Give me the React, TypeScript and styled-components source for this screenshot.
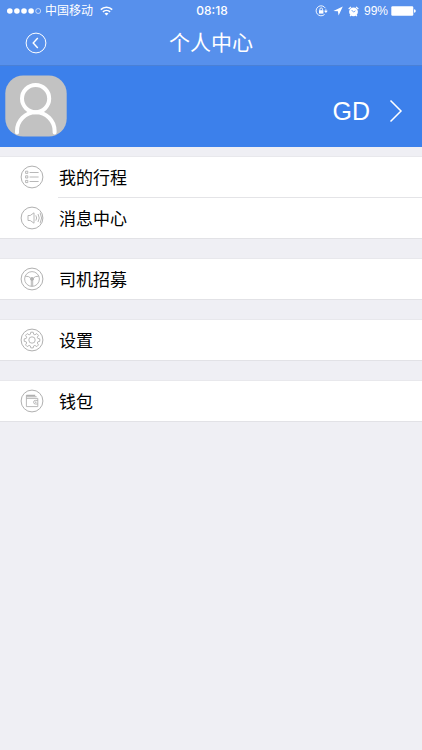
import React from "react";
import styled, { createGlobalStyle } from "styled-components";

const GlobalStyle = createGlobalStyle`
  * { box-sizing: border-box; }
  body {
    margin: 0;
    background: #efeff4;
    font-family: "Liberation Sans", "Noto Sans CJK SC", sans-serif;
    color: #000;
  }
  button { font: inherit; color: inherit; border: 0; padding: 0; background: none; cursor: pointer; }
  svg { display: block; flex: none; }
`;

const Page = styled.div`
  display: flex;
  flex-direction: column;
  min-height: 100vh;
`;

const Header = styled.header`
  background: #5790ec;
  border-bottom: 1px solid #4a80d6;
  color: #fff;
`;

const StatusBar = styled.div`
  display: grid;
  grid-template-columns: 1fr auto 1fr;
  align-items: center;
  height: 22px;
  padding: 0 6px 0 7px;
  line-height: 22px;
`;

const StatusSide = styled.div<{ $end?: boolean }>`
  display: flex;
  align-items: center;
  justify-content: ${(p) => (p.$end ? "flex-end" : "flex-start")};
  gap: ${(p) => (p.$end ? 5 : 3)}px;
`;

const Carrier = styled.span`
  font-size: 12px;
  margin-right: 4px;
`;

const Percent = styled.span`
  margin: 0 -2px 0 0;
  font-size: 12px;
`;

const Clock = styled.time`
  padding-left: 1px;
  font-family: Inter, sans-serif;
  font-size: 12px;
  font-weight: 500;
`;

const NavBar = styled.div`
  display: grid;
  grid-template-columns: 60px 1fr 60px;
  align-items: center;
  height: 43px;
`;

const BackButton = styled.button`
  justify-self: end;
  margin-right: 13px;
  padding-bottom: 1px;
`;

const Title = styled.h1`
  margin: 0;
  font-size: 21px;
  line-height: 40px;
  font-weight: 400;
  text-align: center;
  padding-bottom: 2px;
`;

const Profile = styled.button`
  display: flex;
  align-items: center;
  width: 100%;
  height: 81px;
  padding: 0 19px 0 5px;
  background: #3c80eb;
  color: #fff;
`;

const UserName = styled.span`
  margin-left: auto;
  margin-right: 19px;
  padding-top: 8px;
  font-size: 25px;
  line-height: 30px;
`;

const Chevron = styled.svg`
  margin-top: 8px;
`;

const Menu = styled.nav`
  display: flex;
  flex-direction: column;
  gap: 19px;
  padding-top: 9px;
`;

const Group = styled.ul`
  list-style: none;
  margin: 0;
  padding: 0;
  background: #fff;
  border-top: 1px solid #e8e8ec;
  border-bottom: 1px solid #e2e2e6;
`;

const Item = styled.li`
  & + &::before {
    content: "";
    display: block;
    height: 1px;
    margin-left: 58px;
    background: #e4e4e7;
  }
`;

const Row = styled.button`
  display: flex;
  align-items: center;
  gap: 15px;
  width: 100%;
  height: 40px;
  padding: 0 20px;
  font-size: 17px;
  line-height: 24px;
  text-align: left;
`;

const Label = styled.span`
  padding-top: 4px;
`;

const Signal = () => (
  <svg width="35" height="8" viewBox="0 0 35 8" fill="#fff" aria-hidden="true">
    <circle cx="2.8" cy="4" r="2.8" />
    <circle cx="9.9" cy="4" r="2.8" />
    <circle cx="17" cy="4" r="2.8" />
    <circle cx="24.1" cy="4" r="2.8" />
    <circle cx="31.2" cy="4" r="2.5" fill="none" stroke="#fff" strokeWidth="0.6" />
  </svg>
);

const Wifi = () => (
  <svg width="13" height="10" viewBox="0 0 13 10" fill="none" stroke="#fff" strokeWidth="1.6" aria-hidden="true">
    <path d="M0.8 3.6a8.2 8.2 0 0 1 11.4 0" />
    <path d="M2.9 5.9a5.2 5.2 0 0 1 7.2 0" />
    <path d="M6.5 9.6L4.5 7.6a2.9 2.9 0 0 1 4 0z" fill="#fff" stroke="none" />
  </svg>
);

const RotationLock = () => (
  <svg width="13" height="12" viewBox="0 0 13 12" fill="none" stroke="#fff" strokeWidth="0.9" aria-hidden="true">
    <path d="M10.4 3.2A5 5 0 1 0 9.6 9.4" />
    <path d="M10.9 4.3V6" />
    <path d="M9 5.8h3.8L10.9 8z" fill="#fff" stroke="none" />
    <rect x="4" y="5.2" width="4.4" height="3.4" fill="#fff" stroke="none" />
    <path d="M4.9 5.4V4.2a1.3 1.3 0 0 1 2.6 0v1.2" />
  </svg>
);

const Location = () => (
  <svg width="10" height="10" viewBox="0 0 10 10" fill="#fff" aria-hidden="true">
    <path d="M9.8 0.4L5.6 9.6L4.9 5.3L0.4 4.9z" />
  </svg>
);

const Alarm = () => (
  <svg width="11" height="11" viewBox="0 0 11 11" aria-hidden="true">
    <circle cx="5.5" cy="5.8" r="4.4" fill="#fff" />
    <path d="M0.7 3L3 0.9M10.3 3L8 0.9M2.9 9.1L2.1 10.2M8.1 9.1L8.9 10.2" stroke="#fff" strokeWidth="1.2" />
    <path d="M3.6 4L5.6 6.1L7.4 4.8" fill="none" stroke="#5790ec" strokeWidth="0.8" />
  </svg>
);

const Battery = () => (
  <svg width="25" height="10" viewBox="0 0 25 10" fill="#fff" aria-hidden="true">
    <rect x="0.3" y="0.3" width="22" height="9.4" rx="1.2" />
    <path d="M23 3.2q1.8 0.3 1.8 1.8T23 6.8z" />
  </svg>
);

const BackIcon = () => (
  <svg width="22" height="22" viewBox="0 0 22 22" fill="none" stroke="#fff" aria-hidden="true">
    <circle cx="11" cy="11" r="9.9" strokeWidth="1" />
    <path d="M12.8 6L8.2 11l4.6 5" strokeWidth="1.4" />
  </svg>
);

const Avatar = () => (
  <svg width="62" height="63" viewBox="0 0 62 63" fill="none" role="img" aria-label="头像">
    <rect x="0.3" y="0.5" width="61.4" height="61" rx="18" fill="#c2c2c2" />
    <circle cx="30.6" cy="23.6" r="13.6" stroke="#fff" strokeWidth="4" />
    <path d="M12 57.5V56a18.8 18.8 0 0 1 37.6 0v1.5" stroke="#fff" strokeWidth="4" strokeLinecap="round" />
  </svg>
);

const RingIcon = ({ children }: { children: React.ReactNode }) => (
  <svg width="24" height="24" viewBox="0 0 24 24" fill="none" stroke="#b0b0b0" strokeWidth="0.9" aria-hidden="true">
    <circle cx="12" cy="12" r="10.9" strokeWidth="1" />
    {children}
  </svg>
);

const TripsIcon = () => (
  <RingIcon>
    <path d="M5.6 6.2h2.2v2.2H5.6zM5.6 10.8h2.2V13H5.6zM5.6 15.4h2.2v2.2H5.6zM9.6 7.5h9M9.6 12h9M9.6 16.5h9" />
  </RingIcon>
);

const MessagesIcon = () => (
  <RingIcon>
    <path d="M8 9.5h2.2L14 6.8v10.4l-3.8-2.7H8z" />
    <path d="M15.8 9.4q1.7 2.6 0 5.2M18 8q2.5 4 0 8M20.1 6.8q3 5.2 0 10.4" />
  </RingIcon>
);

const WheelIcon = () => (
  <RingIcon>
    <circle cx="12" cy="12" r="7.4" />
    <circle cx="12" cy="12" r="1.5" fill="#b0b0b0" />
    <path d="M5.2 9.2Q9 9 10.8 11.2M18.8 9.2Q15 9 13.2 11.2M11.3 13.4v5.8M12.7 13.4v5.8" />
  </RingIcon>
);

const SettingsIcon = () => (
  <RingIcon>
    <circle cx="12" cy="12" r="3.2" />
    <path d="M10.8 4.2h2.4l.5 2.1 1.2.5 1.9-1.2 1.7 1.7-1.2 1.9.5 1.2 2 .5v2.4l-2 .5-.5 1.2 1.2 1.9-1.7 1.7-1.9-1.2-1.2.5-.5 2h-2.4l-.5-2-1.2-.5-1.9 1.2-1.7-1.7 1.2-1.9-.5-1.2-2-.5v-2.4l2-.5.5-1.2-1.2-1.9 1.7-1.7 1.9 1.2 1.2-.5z" />
  </RingIcon>
);

const WalletIcon = () => (
  <RingIcon>
    <path d="M6.4 6.4h8.8M6.4 7.8h10.2" strokeWidth="1.1" />
    <path d="M6.4 6v11.6h11.4V9.4H6.4M17.8 11.4h-2.4a1.8 1.8 0 0 0 0 3.6h2.4" />
    <circle cx="15.8" cy="13.2" r="0.4" />
  </RingIcon>
);

const groups = [
  [
    { label: "我的行程", Icon: TripsIcon },
    { label: "消息中心", Icon: MessagesIcon },
  ],
  [{ label: "司机招募", Icon: WheelIcon }],
  [{ label: "设置", Icon: SettingsIcon }],
  [{ label: "钱包", Icon: WalletIcon }],
];

export default function App() {
  return (
    <Page>
      <GlobalStyle />
      <Header>
        <StatusBar>
          <StatusSide>
            <Signal />
            <Carrier>中国移动</Carrier>
            <Wifi />
          </StatusSide>
          <Clock>08:18</Clock>
          <StatusSide $end>
            <RotationLock />
            <Location />
            <Alarm />
            <Percent>99%</Percent>
            <Battery />
          </StatusSide>
        </StatusBar>
        <NavBar>
          <BackButton type="button" aria-label="返回">
            <BackIcon />
          </BackButton>
          <Title>个人中心</Title>
        </NavBar>
      </Header>
      <main>
        <Profile type="button">
          <Avatar />
          <UserName>GD</UserName>
          <Chevron width="14" height="24" viewBox="0 0 14 24" fill="none" stroke="#fff" strokeWidth="1.5" aria-hidden="true">
            <path d="M1.5 1.5L12 12L1.5 22.5" />
          </Chevron>
        </Profile>
        <Menu>
          {groups.map((items) => (
            <Group key={items[0].label}>
              {items.map(({ label, Icon }) => (
                <Item key={label}>
                  <Row type="button">
                    <Icon />
                    <Label>{label}</Label>
                  </Row>
                </Item>
              ))}
            </Group>
          ))}
        </Menu>
      </main>
    </Page>
  );
}
